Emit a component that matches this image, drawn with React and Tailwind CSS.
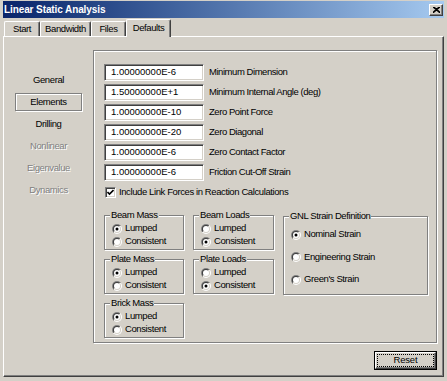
import { useId } from "react";

// bordes estilo Windows clásico
const raised =
  "border border-t-white border-l-white border-r-[#404040] border-b-[#404040] shadow-[inset_-1px_-1px_0_#808080]";
const sunken =
  "border border-t-[#808080] border-l-[#808080] border-r-white border-b-white shadow-[inset_1px_1px_0_#404040,inset_-1px_-1px_0_#d4d0c8]";
const etched =
  "border border-[#808080] shadow-[inset_1px_1px_0_#ffffff,1px_1px_0_#ffffff]";

const fields = [
  { value: "1.00000000E-6", label: "Minimum Dimension" },
  { value: "1.50000000E+1", label: "Minimum Internal Angle (deg)" },
  { value: "1.00000000E-10", label: "Zero Point Force" },
  { value: "1.00000000E-20", label: "Zero Diagonal" },
  { value: "1.00000000E-6", label: "Zero Contact Factor" },
  { value: "1.00000000E-6", label: "Friction Cut-Off Strain" },
];

const navItems = [
  { label: "General" },
  { label: "Elements", active: true },
  { label: "Drilling" },
  { label: "Nonlinear", disabled: true },
  { label: "Eigenvalue", disabled: true },
  { label: "Dynamics", disabled: true },
];

function Radio({ checked }) {
  const id = useId();
  return (
    <svg width="10" height="10" viewBox="0 0 10 10" className="shrink-0">
      <defs>
        <linearGradient id={id + "a"} x1="0" y1="0" x2="1" y2="1">
          <stop offset="0.5" stopColor="#808080" />
          <stop offset="0.5" stopColor="#ffffff" />
        </linearGradient>
        <linearGradient id={id + "b"} x1="0" y1="0" x2="1" y2="1">
          <stop offset="0.5" stopColor="#404040" />
          <stop offset="0.5" stopColor="#d4d0c8" />
        </linearGradient>
      </defs>
      <circle cx="5" cy="5" r="5" fill={`url(#${id}a)`} />
      <circle cx="5" cy="5" r="4" fill={`url(#${id}b)`} />
      <circle cx="5" cy="5" r="3" fill="#ffffff" />
      {checked && <circle cx="5" cy="5" r="1.5" fill="#000000" />}
    </svg>
  );
}

function RadioRow({ label, checked }) {
  return (
    <div className="flex items-center h-[13px]">
      <Radio checked={checked} />
      <span className="ml-[3px] tracking-[-0.4px]">{label}</span>
    </div>
  );
}

function Group({ title, checked, className = "" }) {
  return (
    <fieldset className={`${etched} h-[41px] pl-[7px] ${className}`}>
      <legend className="-ml-[2px] px-[1px] leading-[12px] bg-[#d4d0c8] tracking-[-0.4px]">
        {title}
      </legend>
      <div className="pt-[1px]">
        <RadioRow label="Lumped" checked={checked === 0} />
        <RadioRow label="Consistent" checked={checked === 1} />
      </div>
    </fieldset>
  );
}

export default function App() {
  return (
    <div className="w-[447px] h-[381px] bg-[#d4d0c8] text-black text-[9.5px] font-['Liberation_Sans',Arial,sans-serif]">
      <div className="w-[444px] h-[377px] pl-[3px] pt-[1px] flex flex-col">
        {/* barra de título */}
        <div className="h-[17px] bg-linear-to-r from-[#0a246a] to-[#a6caf0] flex items-center justify-between pl-[1px] pr-[1px]">
          <span className="text-white font-bold text-[10px] tracking-[-0.1px]">
            Linear Static Analysis
          </span>
          <div
            className={`w-[14px] h-[12px] bg-[#d4d0c8] flex items-center justify-center ${raised}`}
          >
            <svg width="7" height="6" viewBox="0 0 7 6">
              <path d="M0 0 L7 6 M1 0 L7 5.2 M7 0 L0 6 M6 0 L0 5.2" stroke="#000" strokeWidth="1.1" />
            </svg>
          </div>
        </div>

        {/* pestañas */}
        <div className="mt-[1px] h-[17px] flex items-end pl-[1px]">
          {[
            ["Start", "w-[36px]"],
            ["Bandwidth", "w-[51px]"],
            ["Files", "w-[35px]"],
          ].map(([t, w]) => (
            <div
              key={t}
              className={`${w} h-[15px] flex items-center justify-center rounded-t-[2px] border-t border-l border-r border-t-white border-l-white border-r-[#404040] shadow-[inset_-1px_0_0_#808080] tracking-[-0.4px]`}
            >
              {t}
            </div>
          ))}
          <div className="w-[45px] h-[18px] -mb-[1px] relative z-10 bg-[#d4d0c8] flex items-center justify-center rounded-t-[2px] border-t border-l border-r border-t-white border-l-white border-r-[#404040] shadow-[inset_-1px_0_0_#808080] tracking-[-0.4px]">
            Defaults
          </div>
        </div>

        {/* panel de la pestaña */}
        <div className={`flex-1 flex flex-col pt-[13px] ${raised}`}>
          <div className="flex">
            <nav className="w-[89px] pt-[19px] flex flex-col">
              {navItems.map((item) => (
                <div key={item.label} className="h-[22px] flex items-center justify-center">
                  {item.active ? (
                    <div className={`w-[67px] h-[18px] flex items-center justify-center ${etched}`}>
                      <span className="tracking-[-0.4px]">{item.label}</span>
                    </div>
                  ) : (
                    <span
                      className={`tracking-[-0.4px] ${
                        item.disabled ? "text-[#808080] [text-shadow:1px_1px_0_#ffffff]" : ""
                      }`}
                    >
                      {item.label}
                    </span>
                  )}
                </div>
              ))}
            </nav>

            <div className={`w-[344px] h-[293px] pl-[10px] pt-[13px] ${etched}`}>
              <div className="flex flex-col gap-[3px]">
                {fields.map((f) => (
                  <div key={f.label} className="h-[17px] flex items-center">
                    <div className={`w-[100px] h-[17px] bg-white flex items-center pl-[6px] ${sunken}`}>
                      {f.value}
                    </div>
                    <span className="ml-[5px] tracking-[-0.45px]">{f.label}</span>
                  </div>
                ))}
                <div className="h-[17px] flex items-center">
                  <div className={`ml-[1px] w-[11px] h-[11px] bg-white flex items-center justify-center ${sunken}`}>
                    <svg width="7" height="7" viewBox="0 0 7 7">
                      <path d="M0.5 3 L2.5 5 L6.5 1" stroke="#000" strokeWidth="1.6" fill="none" />
                    </svg>
                  </div>
                  <span className="ml-[3px] tracking-[-0.4px]">
                    Include Link Forces in Reaction Calculations
                  </span>
                </div>
              </div>

              <div className="mt-[8px] flex gap-[9px] items-start">
                <div className="w-[80px] flex flex-col gap-[3px]">
                  <Group title="Beam Mass" checked={0} />
                  <Group title="Plate Mass" checked={0} />
                  <Group title="Brick Mass" checked={0} />
                </div>
                <div className="w-[81px] flex flex-col gap-[3px]">
                  <Group title="Beam Loads" checked={1} />
                  <Group title="Plate Loads" checked={1} />
                </div>
                <fieldset className={`${etched} mt-[1px] w-[145px] h-[85px] pl-[7px]`}>
                  <legend className="-ml-[2px] px-[1px] leading-[12px] bg-[#d4d0c8] tracking-[-0.4px]">
                    GNL Strain Definition
                  </legend>
                  <div className="pt-[6px] flex flex-col gap-[9.5px]">
                    <RadioRow label="Nominal Strain" checked />
                    <RadioRow label="Engineering Strain" />
                    <RadioRow label="Green's Strain" />
                  </div>
                </fieldset>
              </div>
            </div>
          </div>

          <div className="mt-[8px] flex justify-end pr-[6px]">
            <button className="w-[63px] h-[19px] border border-black bg-[#d4d0c8] p-0">
              <div className={`w-full h-full p-[1px] ${raised}`}>
                <div className="w-full h-full border border-dotted border-black flex items-center justify-center tracking-[-0.2px]">
                  Reset
                </div>
              </div>
            </button>
          </div>
        </div>
      </div>
    </div>
  );
}
